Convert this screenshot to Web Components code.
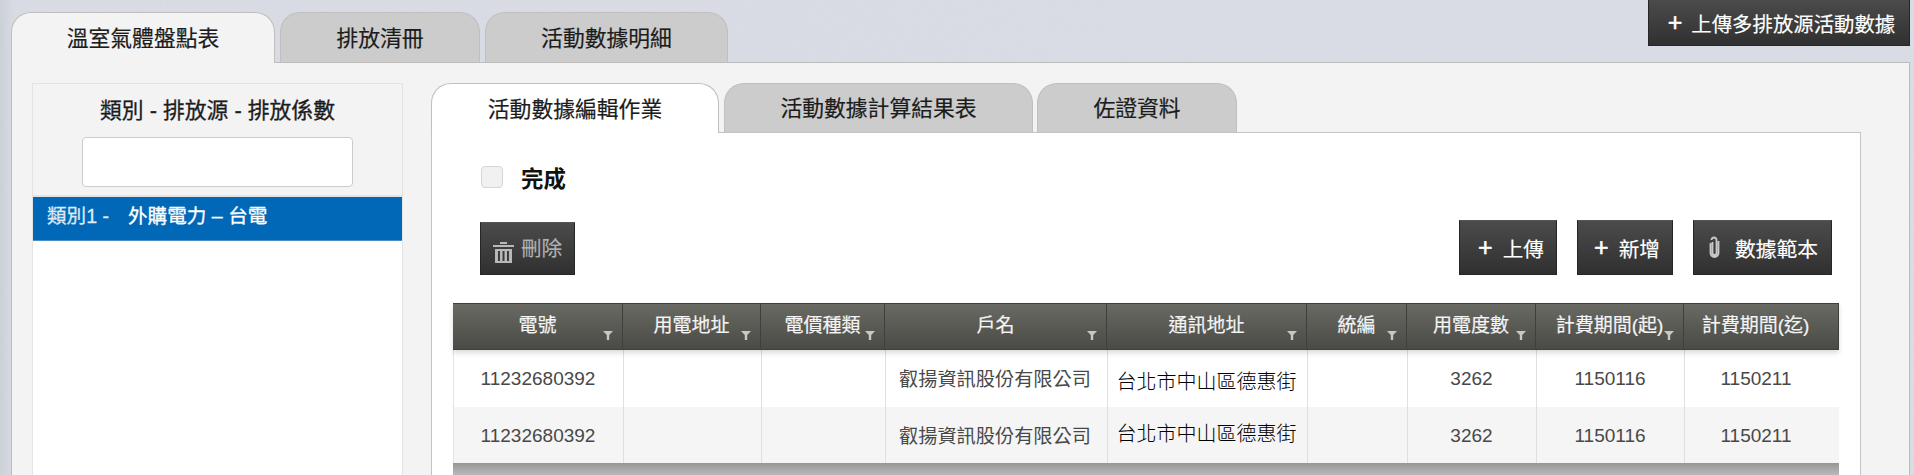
<!DOCTYPE html>
<html lang="zh-Hant"><head><meta charset="utf-8"><title>溫室氣體盤點表</title>
<style>
html,body{margin:0;padding:0;height:475px;overflow:hidden;background:#dadde5}
body{font-family:"Liberation Sans","Noto Sans CJK TC",sans-serif;color:#222}
</style></head><body>
<ghg-app></ghg-app>
<script>
const FONT='"Liberation Sans","Noto Sans CJK TC",sans-serif';
function def(name,html,setup){
  customElements.define(name,class extends HTMLElement{
    constructor(){super();this.attachShadow({mode:'open'}).innerHTML=html;}
    connectedCallback(){if(setup&&!this._d){this._d=1;setup.call(this,this.shadowRoot);}}
  });
}
def('ui-tab',`<style>
:host{display:flex;align-items:center;justify-content:center;box-sizing:border-box;height:var(--tab-h,50px);
 width:var(--w);background:#ccc;border:1px solid #bfbfbf;border-bottom:0;border-radius:20px 20px 0 0;
 font-size:21.8px;color:#1c1c1c;padding-bottom:3px;white-space:nowrap;-webkit-text-stroke:.2px currentColor}
:host([active]){background:var(--active-bg,#f3f3f3);height:calc(var(--tab-h,50px) + 1px);margin-bottom:-1px;position:relative;z-index:1}
</style><slot></slot>`);
def('ui-btn',`<style>
:host{display:inline-flex;align-items:center;justify-content:center;box-sizing:border-box;
 height:var(--h,55px);width:var(--w);background:linear-gradient(#4b4b4b,#303030);border:1px solid #262626;border-top-color:#555;
 color:#fff;font-size:var(--fs,20.6px);white-space:nowrap;gap:var(--gap,10px);padding-left:var(--pl,0);-webkit-text-stroke:.15px currentColor}
:host([disabled]){color:#b0b0b0;align-self:flex-end;height:53px;padding-bottom:3px}
</style><slot name="icon"></slot><slot></slot>`);
def('ghg-side',`<style>
:host{display:flex;flex-direction:column;box-sizing:border-box;width:371px;border:1px solid #e3e3e3;border-bottom:0;background:#fff}
.head{background:#f3f3f3;height:111px;border-bottom:2px solid #e3e3e3;display:flex;flex-direction:column;align-items:center}
h2{margin:0;height:53px;box-sizing:border-box;padding-bottom:4px;font-size:21.8px;font-weight:400;color:#1c1c1c;display:flex;align-items:center;-webkit-text-stroke:.3px currentColor}
input{display:block;box-sizing:border-box;width:271px;height:50px;border:1px solid #ccc;border-radius:4px;background:#fff;margin:0;padding:0}
.row{background:#0068b7;height:44px;color:#fff;font-size:19.6px;display:flex;align-items:center;padding:0 0 8px 14px;box-sizing:border-box;border-bottom:1px solid #4a90c8;white-space:nowrap;-webkit-text-stroke:.3px currentColor}
.a{width:81px;color:#dfeaf5}
</style><div class="head"><h2>類別 - 排放源 - 排放係數</h2><input aria-label="搜尋"></div>
<div class="row"><span class="a">類別1 -</span><span>外購電力 – 台電</span></div>`);
const COLS=[['電號',170,1],['用電地址',138,1],['電價種類',124,1],['戶名',222,1],['通訊地址',200,1],['統編',100,1],['用電度數',129,1],['計費期間(起)',148,1],['計費期間(迄)',155,0]];
const ROW=['11232680392','','','叡揚資訊股份有限公司','台北市中山區德惠街','','3262','1150116','1150211'];
const filt=`<svg class="f" width="10" height="9" viewBox="0 0 10 9"><path d="M0 0h10L6.200 4v5H3.800V4z" fill="#c8c8c4"/></svg>`;
def('ghg-grid',`<style>
:host{display:block;width:1386px;font-size:19px;color:#484848}
.h{display:grid;grid-template-columns:var(--c);height:47px;box-sizing:border-box;background:linear-gradient(#6a6a64,#4a4a46);border:1px solid #3f3f3c;border-width:1px 1px 1px 0;position:relative;z-index:2;box-shadow:0 3px 5px rgba(0,0,0,.14)}
.h div{position:relative;display:flex;align-items:center;justify-content:center;color:#f4f4f4;border-right:1px solid #3f3f3c;font-size:19px;padding-bottom:6px;box-sizing:border-box;white-space:nowrap;-webkit-text-stroke:.2px currentColor}
.h div:last-child{border-right:0;padding-right:12px}
.f{position:absolute;right:9px;top:27px}
.r{display:grid;grid-template-columns:var(--c);height:56.5px;background:#fff;border-left:1px solid #e3e3e3}
.r+.r{background:#f5f5f5}
.r div{display:flex;align-items:center;justify-content:center;border-right:1px solid #e0e0e0;box-sizing:border-box;white-space:nowrap;margin-left:-1px;padding-top:2px}
.r div:nth-child(4){padding-top:0;font-size:19.2px;padding-right:2px}
.r div:nth-child(5){color:#000;font-size:20px;font-weight:300;padding-top:4px;padding-right:1px}
.r+.r div:nth-child(5){padding-top:0;padding-bottom:4px}
.r div:last-child{border-right:0;width:145px;padding-right:1px}
.s{height:13px;background:linear-gradient(#969696,#bcbcbc)}
</style><div class="h"></div><div class="r"></div><div class="r"></div><div class="s"></div>`,function(s){
  const tpl=COLS.map(c=>c[1]+'px').join(' ');
  this.style.setProperty('--c',tpl);
  s.querySelector('.h').innerHTML=COLS.map(c=>`<div>${c[0]}${c[2]?filt:''}</div>`).join('');
  s.querySelectorAll('.r').forEach(r=>{
    r.innerHTML=ROW.map(t=>`<div>${t}</div>`).join('');
  });
});
const plus=`<span slot="icon" style="font-size:25px;line-height:1;font-family:'Liberation Sans';-webkit-text-stroke:.5px #fff">+</span>`;
def('ghg-app',`<style>
:host{display:block;height:475px;overflow:hidden;position:relative;font-family:${FONT};
 background:linear-gradient(90deg,#cdd1d8 0,#d9dce4 14px,#dadde5 100%)}
.noise{position:absolute;inset:0;width:100%;height:100%;opacity:.05;pointer-events:none}
.top{display:flex;gap:5px;padding:12px 0 0 11px;position:relative;z-index:1;--active-bg:#f3f3f3}
.main{position:relative;box-sizing:border-box;height:414px;margin:0 4px 0 11px;background:#f3f3f3;border:1px solid #bcbcbc;border-bottom:0;padding:20px 48px 0 20px;display:flex;gap:28px;--active-bg:#fff}
.work{flex:1;display:flex;flex-direction:column;min-width:0}
.sub{display:flex;gap:5px;--tab-h:49px;position:relative;z-index:1}
.panel{flex:1;background:#fff;border:1px solid #c4c4c4;border-bottom:0;padding:33px 21px 0}
.check{display:flex;align-items:center;gap:18px;margin-left:28px;height:22px;font-size:22.4px;font-weight:700;color:#111}
.box{width:22px;height:22px;box-sizing:border-box;border:1px solid #d5d5d5;border-radius:4px;background:#f1f1f1}
.bar{display:flex;align-items:flex-start;margin-top:32px;padding:0 7px 0 27px;height:55px}
.bar .sp{flex:1}
.bar ui-btn+ui-btn{margin-left:20px}
.g{margin-top:28px}
.upload{position:absolute;top:-1px;right:4px;z-index:3;--h:47px;--w:262px;--gap:9px;--pl:5px;--fs:20.4px}
</style>
<svg class="noise" aria-hidden="true"><filter id="n"><feTurbulence type="fractalNoise" baseFrequency=".55" numOctaves="2" seed="4"/><feColorMatrix type="saturate" values="0"/></filter><rect width="100%" height="100%" filter="url(#n)"/></svg>
<ui-btn class="upload">${plus}上傳多排放源活動數據</ui-btn>
<div class="top">
 <ui-tab active style="--w:264px">溫室氣體盤點表</ui-tab><ui-tab style="--w:200px">排放清冊</ui-tab><ui-tab style="--w:243px">活動數據明細</ui-tab>
</div>
<div class="main">
 <ghg-side></ghg-side>
 <div class="work">
  <div class="sub"><ui-tab active style="--w:288px">活動數據編輯作業</ui-tab><ui-tab style="--w:309px">活動數據計算結果表</ui-tab><ui-tab style="--w:200px;margin-left:-1px">佐證資料</ui-tab></div>
  <div class="panel">
   <div class="check"><span class="box"></span><span>完成</span></div>
   <div class="bar">
    <ui-btn disabled style="--w:95px;--gap:7px"><svg slot="icon" width="21" height="21" viewBox="0 0 21 21" style="margin-top:11px"><path d="M0 3h21v2H0zM7 0h7v2H7zM2 7h17v14H2z" fill="#b8b8b8"/><path d="M5 9h2v10H5zM9.500 9h2v10h-2zM14 9h2v10h-2z" fill="#3c3c3c"/></svg>刪除</ui-btn>
    <span class="sp"></span>
    <ui-btn style="--w:98px;--pl:6px">${plus}上傳</ui-btn>
    <ui-btn style="--w:96px;--pl:4px">${plus}新增</ui-btn>
    <ui-btn style="--w:139px;--gap:15px;--pl:2px;--fs:20.8px"><svg slot="icon" width="11" height="23" viewBox="0 0 11 23"><path d="M3.500 6v11a2 2 0 0 0 4 0V4A2.500 2.500 0 0 0 2.500 4M1.500 7v10a4 4 0 0 0 8 0V5" fill="none" stroke="#c9c9c9" stroke-width="1.800"/></svg>數據範本</ui-btn>
   </div>
   <ghg-grid class="g"></ghg-grid>
  </div>
 </div>
</div>`);
</script>
</body></html>
